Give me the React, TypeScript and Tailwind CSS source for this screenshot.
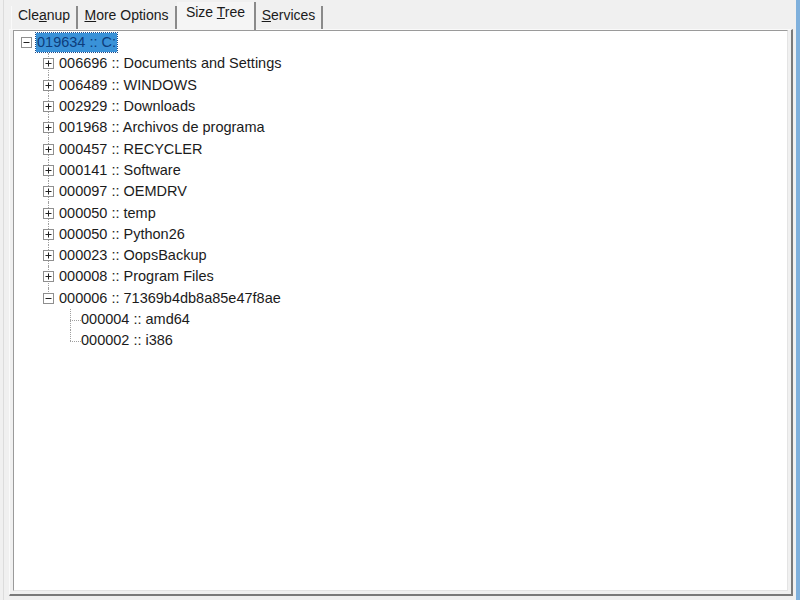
import React from "react";

type Node = { size: string; name: string; open?: boolean; leaf?: boolean; kids?: Node[] };

const ROOT: Node = {
  size: "019634",
  name: "C:",
  open: true,
  kids: [
    { size: "006696", name: "Documents and Settings" },
    { size: "006489", name: "WINDOWS" },
    { size: "002929", name: "Downloads" },
    { size: "001968", name: "Archivos de programa" },
    { size: "000457", name: "RECYCLER" },
    { size: "000141", name: "Software" },
    { size: "000097", name: "OEMDRV" },
    { size: "000050", name: "temp" },
    { size: "000050", name: "Python26" },
    { size: "000023", name: "OopsBackup" },
    { size: "000008", name: "Program Files" },
    {
      size: "000006",
      name: "71369b4db8a85e47f8ae",
      open: true,
      kids: [
        { size: "000004", name: "amd64", leaf: true },
        { size: "000002", name: "i386", leaf: true },
      ],
    },
  ],
};

function Box({ open }: { open?: boolean }) {
  return (
    <svg width="11" height="11" viewBox="0 0 11 11" className="relative shrink-0">
      <rect x="0.5" y="0.5" width="10" height="10" fill="#fff" stroke="#8f8f8f" />
      <line x1="2.5" y1="5.5" x2="8.5" y2="5.5" stroke="#222" />
      {!open && <line x1="5.5" y1="2.5" x2="5.5" y2="8.5" stroke="#222" />}
    </svg>
  );
}

function Row({ node, depth, last, selected }: { node: Node; depth: number; last?: boolean; selected?: boolean }) {
  const lineX = 34 + (depth - 1) * 22;
  return (
    <div className="relative flex h-[21.3px] items-center">
      {depth > 0 && (
        <div
          className={`absolute top-0 w-0 border-l border-dotted border-[#a0a0a0] ${last ? "h-1/2" : "h-full"}`}
          style={{ left: lineX }}
        />
      )}
      {node.leaf && (
        <div
          className="absolute top-1/2 h-0 w-[11px] border-t border-dotted border-[#a0a0a0]"
          style={{ left: lineX }}
        />
      )}
      <div className="flex items-center" style={{ paddingLeft: 7 + depth * 22 }}>
        {node.leaf ? <span className="w-[11px]" /> : <Box open={node.open} />}
        <span
          className={`ml-[4px] whitespace-nowrap px-[1px] leading-[19px] ${
            selected ? "bg-[#3a92d8] text-[#0d3d7c] outline-1 outline-dotted outline-[#1a4a8a]" : "text-[#1b1b1b]"
          }`}
        >
          {node.size} :: {node.name}
        </span>
      </div>
    </div>
  );
}

function Tab({
  children,
  selected,
  first,
  className,
}: {
  children: React.ReactNode;
  selected?: boolean;
  first?: boolean;
  className?: string;
}) {
  return (
    <div
      className={`flex shrink-0 items-center justify-center border-r-2 border-[#8a8a8a] ${
        selected ? "-mb-[1px] h-[28px] bg-[#f5f5f5] pb-[7px]" : "h-[23px] bg-[#f0f0f0] pb-[5px]"
      } ${first ? "border-l border-l-[#fafafa]" : ""} ${className ?? ""}`}
    >
      <span className="whitespace-pre">{children}</span>
    </div>
  );
}

export default function App() {
  const kids = ROOT.kids ?? [];
  return (
    <div
      className="relative h-[600px] w-[800px] overflow-hidden bg-[#f0f0f0] text-[14.5px] text-[#1b1b1b]"
      style={{ fontFamily: "'Liberation Sans', Arial, sans-serif" }}
    >
      <div className="absolute right-0 top-0 h-full w-[4px] bg-[#7fb0dc]" />
      <div className="absolute left-[3px] top-0 h-full w-px bg-[#dcdcdc]" />
      <div className="flex h-[29px] items-end pl-[11px] text-[14px]">
        <Tab first className="w-[67px]">
          Cle<u>a</u>nup
        </Tab>
        <Tab className="w-[99px] border-r-0">
          <u>M</u>ore Options
        </Tab>
        <Tab selected className="w-[79px]">
          Size <u>T</u>ree
        </Tab>
        <Tab className="w-[67px]">
          <u>S</u>ervices
        </Tab>
      </div>
      <div className="ml-[9px] mr-[7px] h-[567px] border-b-2 border-l border-r-2 border-t border-b-[#7a7a7a] border-l-[#fafafa] border-r-[#7a7a7a] border-t-[#fafafa] p-[3px] pt-0">
        <div className="h-[561px] border-b border-l border-r border-t border-b-[#e4e4e4] border-l-[#9a9a9a] border-r-[#e4e4e4] border-t-[#9a9a9a] bg-white pt-[1px]">
          <Row node={ROOT} depth={0} selected />
          {kids.map((k, i) => (
            <React.Fragment key={k.name}>
              <Row node={k} depth={1} last={i === kids.length - 1} />
              {k.open &&
                k.kids?.map((g, j) => (
                  <Row key={g.name} node={g} depth={2} last={j === (k.kids?.length ?? 0) - 1} />
                ))}
            </React.Fragment>
          ))}
        </div>
      </div>
    </div>
  );
}
